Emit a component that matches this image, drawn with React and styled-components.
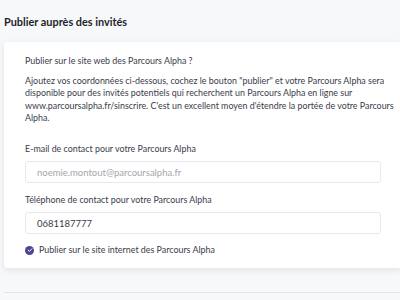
import React from "react";
import styled, { createGlobalStyle } from "styled-components";

const GlobalStyle = createGlobalStyle`
  html, body {
    margin: 0;
    padding: 0;
    background: #f7f8fa;
    overflow: hidden;
  }
  body {
    font-family: Lato, "Open Sans", sans-serif;
    color: #3b3b4a;
  }
`;

const Page = styled.div`
  width: 398px;
  padding: 14px 0 0 4px;
`;

const Title = styled.h2`
  margin: 0 0 13px;
  font-size: 10.9px;
  font-weight: 700;
  color: #1f1f2b;
  line-height: 15px;
`;

const Card = styled.div`
  background: #fff;
  border-radius: 4px;
  box-shadow: 0 2px 6px rgba(30, 40, 60, 0.1);
  padding: 13px 21px 12px 21px;
  display: flex;
  flex-direction: column;
`;

const Question = styled.p`
  margin: 0 0 8px;
  font-size: 8.9px;
  line-height: 12px;
`;

const Paragraph = styled.p`
  margin: 0 0 19px;
  font-size: 8.9px;
  line-height: 12.3px;
  white-space: nowrap;
`;

const Label = styled.label`
  display: block;
  font-size: 8.9px;
  line-height: 12px;
  margin-bottom: 6px;
`;

const Input = styled.input`
  box-sizing: border-box;
  width: 100%;
  height: 22px;
  border: 1px solid #e7e9ec;
  border-radius: 3px;
  padding: 0 11px;
  font-family: inherit;
  font-size: 9.5px;
  color: #3b3b4a;
  background: #fff;
  margin-bottom: ${({ $last }) => ($last ? "10px" : "11px")};
  outline: none;
  &::placeholder {
    color: #a3a6ad;
  }
`;

const CheckRow = styled.div`
  display: flex;
  align-items: center;
  gap: 5px;
  font-size: 8.9px;
  line-height: 12px;
`;

const Check = styled.span`
  width: 9px;
  height: 9px;
  border-radius: 50%;
  background: #4c4596;
  display: flex;
  align-items: center;
  justify-content: center;
`;

const Divider = styled.div`
  margin-top: 24px;
  height: 1px;
  background: #e3e5e8;
`;

export default function App() {
  return (
    <>
      <GlobalStyle />
      <Page>
        <Title>Publier auprès des invités</Title>
        <Card>
          <Question>Publier sur le site web des Parcours Alpha ?</Question>
          <Paragraph>
            Ajoutez vos coordonnées ci-dessous, cochez le bouton "publier" et votre Parcours Alpha sera
            <br />
            disponible pour des invités potentiels qui recherchent un Parcours Alpha en ligne sur
            <br />
            www.parcoursalpha.fr/sinscrire. C'est un excellent moyen d'étendre la portée de votre Parcours
            <br />
            Alpha.
          </Paragraph>
          <Label>E-mail de contact pour votre Parcours Alpha</Label>
          <Input placeholder="noemie.montout@parcoursalpha.fr" />
          <Label>Téléphone de contact pour votre Parcours Alpha</Label>
          <Input $last defaultValue="0681187777" />
          <CheckRow>
            <Check>
              <svg width="6" height="6" viewBox="0 0 10 10">
                <path d="M2 5.2 L4.2 7.3 L8 3" fill="none" stroke="#fff" strokeWidth="1.6" strokeLinecap="round" strokeLinejoin="round" />
              </svg>
            </Check>
            Publier sur le site internet des Parcours Alpha
          </CheckRow>
        </Card>
        <Divider />
      </Page>
    </>
  );
}
